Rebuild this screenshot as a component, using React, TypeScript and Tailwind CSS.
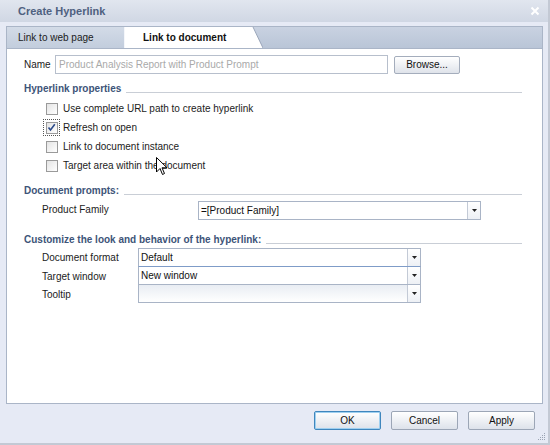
import React from "react";

const Checkbox = ({ checked, focused }: { checked?: boolean; focused?: boolean }) => (
  <span
    className={
      "flex items-center justify-center w-[17px] h-[17px] " +
      (focused ? "border border-dotted border-[#555]" : "border border-transparent")
    }
  >
    <span className="flex items-center justify-center w-[12px] h-[12px] border border-[#9a9a9a] bg-gradient-to-br from-[#e4e4e4] to-[#ffffff]">
      {checked && (
        <svg width="9" height="9" viewBox="0 0 9 9">
          <path d="M1.5 4.5 L3.5 7 L7.8 1.2" fill="none" stroke="#2b4a8a" strokeWidth="1.6" />
        </svg>
      )}
    </span>
  </span>
);

const Heading = ({ children }: { children: React.ReactNode }) => (
  <div className="flex items-end gap-[5px] pr-[20px]">
    <span className="font-bold text-[#3d5478] leading-[13px]">{children}</span>
    <span className="flex-1 border-b border-[#c9ced6] mb-[2px]" />
  </div>
);

const Combo = ({
  value,
  shaded,
  className,
}: {
  value?: string;
  shaded?: boolean;
  className?: string;
}) => (
  <div
    className={
      "flex h-[19px] border border-[#a9b4c6] " +
      (shaded ? "bg-gradient-to-b from-[#e9edf3] to-[#ffffff] " : "bg-white ") +
      (className ?? "")
    }
  >
    <div className="flex-1 flex items-center pl-[2px] text-[#111]">{value}</div>
    <div className="w-[13px] flex items-center justify-center border-l border-[#c3cad6] bg-gradient-to-b from-[#ffffff] to-[#edf0f5]">
      <svg width="5" height="3" viewBox="0 0 5 3">
        <path d="M0 0 H5 L2.5 3 Z" fill="#222" />
      </svg>
    </div>
  </div>
);

const Button = ({ label, primary }: { label: string; primary?: boolean }) => (
  <button
    className={
      "w-[67px] h-[19px] rounded-[2px] border bg-gradient-to-b from-[#ffffff] to-[#dde2ea] text-[#111] leading-none " +
      (primary ? "border-[#3f86bd] shadow-[inset_0_0_0_1px_#9fd0f0]" : "border-[#9ca6b6]")
    }
  >
    {label}
  </button>
);

export default function App() {
  return (
    <div className="relative w-[550px] h-[445px] flex flex-col bg-[#e6eaf5] border-r-2 border-b-2 border-[#c3c9d4] font-['Liberation_Sans',Arial,sans-serif] text-[10px] text-[#1b1b1b] overflow-hidden">
      {/* title bar */}
      <div className="h-[22px] flex items-center justify-between pl-[18px] pr-[8px] bg-gradient-to-b from-[#e1e6ef] to-[#d0d7e4]">
        <span className="font-bold text-[11px] text-[#4f6180]">Create Hyperlink</span>
        <svg width="10" height="10" viewBox="0 0 10 10">
          <path d="M1.5 1.5 L8.5 8.5 M8.5 1.5 L1.5 8.5" stroke="#ffffff" strokeWidth="2" />
        </svg>
      </div>

      <div className="flex-1 flex flex-col pl-[6px] pr-[5px] pt-[4px]">
        {/* tab strip */}
        <div className="h-[22px] flex items-end bg-gradient-to-b from-[#c9d2e1] to-[#b9c5d7] border border-b-0 border-[#aab5c7]">
          <div className="h-[21px] w-[118px] flex items-center pl-[11px] bg-gradient-to-b from-[#d3dbe7] to-[#c2cddd] border-r border-[#f4f6fa] text-[#1b1b1b]">
            Link to web page
          </div>
          <div className="relative h-[21px] w-[128px] flex items-center pl-[18px] bg-white font-bold text-[#111]">
            Link to document
            <svg className="absolute -right-[10px] top-0" width="11" height="21" viewBox="0 0 11 21">
              <path d="M0 0 L1 0 L11 21 L0 21 Z" fill="#ffffff" />
              <path d="M1 0 L11 21" stroke="#9aa6ba" strokeWidth="1" fill="none" />
            </svg>
          </div>
        </div>

        {/* panel */}
        <div className="flex-1 flex flex-col bg-white border border-[#aab5c7] pl-[17px] pt-[6px]">
          <div className="flex items-center h-[19px]">
            <span className="w-[31px]">Name</span>
            <div className="w-[333px] h-[19px] flex items-center pl-[3px] border border-[#b7bfcc] text-[#a9a9a9]">
              Product Analysis Report with Product Prompt
            </div>
            <button className="ml-[6px] w-[66px] h-[18px] rounded-[2px] border border-[#a4adbc] bg-gradient-to-b from-[#ffffff] to-[#dfe3ea] text-[#111] leading-none">
              Browse...
            </button>
          </div>

          <div className="mt-[8px]">
            <Heading>Hyperlink properties</Heading>
          </div>
          <div className="flex flex-col pl-[19px] mt-[5px] gap-[2px]">
            <div className="flex items-center gap-[3px] h-[17px]">
              <Checkbox />
              <span>Use complete URL path to create hyperlink</span>
            </div>
            <div className="flex items-center gap-[3px] h-[17px]">
              <Checkbox checked focused />
              <span>Refresh on open</span>
            </div>
            <div className="flex items-center gap-[3px] h-[17px]">
              <Checkbox />
              <span>Link to document instance</span>
            </div>
            <div className="flex items-center gap-[3px] h-[17px]">
              <Checkbox />
              <span>Target area within the document</span>
            </div>
          </div>

          <div className="mt-[10px]">
            <Heading>Document prompts:</Heading>
          </div>
          <div className="flex items-center pl-[18px] mt-[4px]">
            <span className="w-[156px] -mt-[2px]">Product Family</span>
            <Combo value="=[Product Family]" className="w-[283px]" />
          </div>

          <div className="mt-[13px]">
            <Heading>Customize the look and behavior of the hyperlink:</Heading>
          </div>
          <div className="flex flex-col pl-[18px] mt-[2px]">
            <div className="flex items-center">
              <span className="w-[96px]">Document format</span>
              <Combo value="Default" className="w-[283px]" />
            </div>
            <div className="flex items-center">
              <span className="w-[96px]">Target window</span>
              <Combo value="New window" className="w-[283px] border-t-[#7f9cc8] -mt-px" />
            </div>
            <div className="flex items-center">
              <span className="w-[96px]">Tooltip</span>
              <Combo shaded className="w-[283px] -mt-px" />
            </div>
          </div>
        </div>
      </div>

      {/* footer */}
      <div className="h-[39px] flex items-start justify-end gap-[10px] pr-[13px] pt-[7px]">
        <Button label="OK" primary />
        <Button label="Cancel" />
        <Button label="Apply" />
      </div>

      {/* resize grip */}
      <svg className="absolute right-[2px] bottom-[2px]" width="8" height="8" viewBox="0 0 8 8">
        <g fill="#9aa3b2">
          <rect x="6" y="0" width="1" height="1" />
          <rect x="4" y="2" width="1" height="1" />
          <rect x="6" y="2" width="1" height="1" />
          <rect x="2" y="4" width="1" height="1" />
          <rect x="4" y="4" width="1" height="1" />
          <rect x="6" y="4" width="1" height="1" />
          <rect x="0" y="6" width="1" height="1" />
          <rect x="2" y="6" width="1" height="1" />
          <rect x="4" y="6" width="1" height="1" />
          <rect x="6" y="6" width="1" height="1" />
        </g>
      </svg>

      {/* mouse cursor */}
      <svg className="absolute left-[156px] top-[157px]" width="12" height="19" viewBox="0 0 12 19">
        <path d="M0.5 0.5 L0.5 15 L4 11.5 L6.5 17.5 L8.5 16.5 L6 10.8 L11 10.8 Z" fill="#ffffff" stroke="#000" strokeWidth="1" />
      </svg>
    </div>
  );
}
